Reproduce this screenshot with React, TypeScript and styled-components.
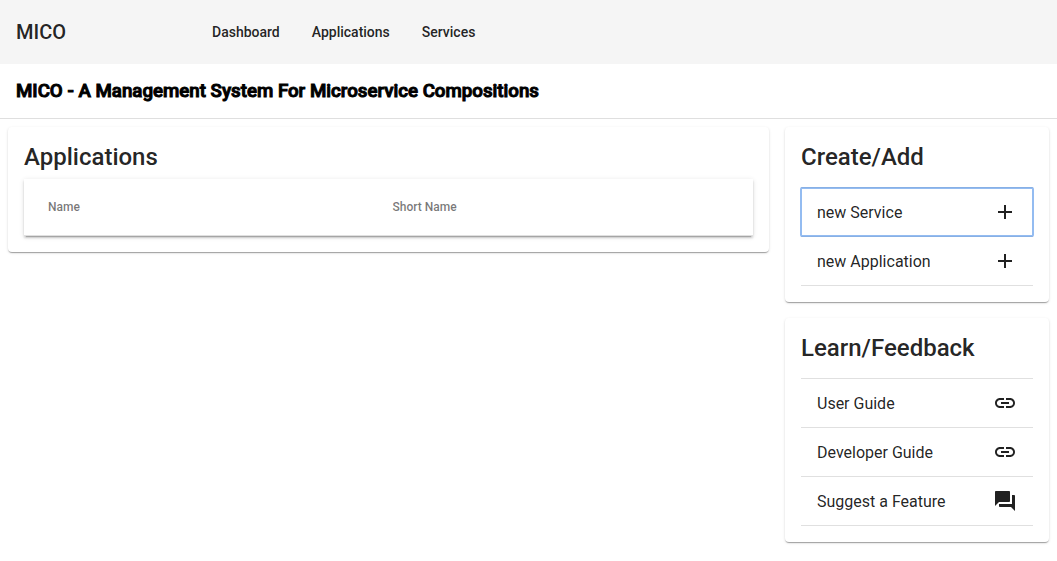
import React from "react";
import styled, { createGlobalStyle } from "styled-components";

const GlobalStyle = createGlobalStyle`
  *, *::before, *::after { box-sizing: border-box; }
  body {
    margin: 0;
    background: #fff;
    color: rgba(0, 0, 0, 0.87);
    font-family: Roboto, "Liberation Sans", sans-serif;
  }
`;

const Toolbar = styled.header`
  display: flex;
  align-items: center;
  height: 64px;
  padding: 0 16px;
  background: #f5f5f5;
`;

const Brand = styled.span`
  width: 180px;
  font-size: 20px;
  font-weight: 500;
  line-height: 32px;
`;

const Nav = styled.nav`
  display: flex;
`;

const NavLink = styled.a`
  padding: 0 16px;
  color: inherit;
  font-size: 14px;
  font-weight: 500;
  line-height: 36px;
  text-decoration: none;
`;

const PageTitle = styled.h3`
  margin: 0;
  padding: 11px 16px;
  border-bottom: 1px solid #dfdfdf;
  color: #000;
  font-weight: 500;
  line-height: 32px;
  -webkit-text-stroke: 1px #000;
`;

const Content = styled.main`
  display: grid;
  grid-template-columns: minmax(0, 1fr) 264px;
  align-items: start;
  gap: 16px;
  padding: 8px;
`;

const Sidebar = styled.aside`
  display: grid;
  gap: 16px;
`;

const Card = styled.section`
  padding: 16px;
  border-radius: 4px;
  background: #fff;
  box-shadow: 0 2px 1px -1px rgba(0, 0, 0, 0.2), 0 1px 1px 0 rgba(0, 0, 0, 0.14),
    0 1px 3px 0 rgba(0, 0, 0, 0.12);
`;

const CardTitle = styled.h2`
  margin: 0 0 8px;
  font-size: 24px;
  font-weight: 500;
  line-height: 28px;
`;

const Table = styled.table`
  width: 100%;
  table-layout: fixed;
  border-spacing: 0;
  background: #fff;
  box-shadow: 0 3px 1px -2px rgba(0, 0, 0, 0.2), 0 2px 2px 0 rgba(0, 0, 0, 0.14),
    0 1px 5px 0 rgba(0, 0, 0, 0.12);
`;

const HeaderCell = styled.th`
  height: 57px;
  padding: 0 0 0 4px;
  border-bottom: 1px solid #e0e0e0;
  color: rgba(0, 0, 0, 0.54);
  font-size: 12px;
  font-weight: 500;
  text-align: left;

  &:first-child { padding-left: 24px; }
`;

const List = styled.ul`
  margin: 16px 0 0;
  padding: 0;
  border-top: 1px solid #e0e0e0;
  list-style: none;
`;

const ListItem = styled.li`
  border-bottom: 1px solid #e0e0e0;
`;

const Action = styled.button<{ $active?: boolean }>`
  display: flex;
  align-items: center;
  justify-content: space-between;
  width: 100%;
  height: 48px;
  padding: 0 16px;
  border: 0;
  border-radius: 1px;
  background: none;
  color: inherit;
  font: inherit;
  font-size: 16px;
  text-align: left;
  text-decoration: none;
  cursor: pointer;
  outline: ${(p) => (p.$active ? "2px solid rgba(77, 144, 232, 0.6)" : "none")};
  outline-offset: -1px;
`;

const Icon = styled.svg`
  width: 24px;
  height: 24px;
  fill: currentColor;
`;

const PATHS = {
  add: "M19 13h-6v6h-2v-6H5v-2h6V5h2v6h6v2z",
  link: "M3.9 12c0-1.71 1.39-3.1 3.1-3.1h4V7H7c-2.76 0-5 2.24-5 5s2.24 5 5 5h4v-1.9H7c-1.71 0-3.1-1.39-3.1-3.1zM8 13h8v-2H8v2zm9-6h-4v1.9h4c1.71 0 3.1 1.39 3.1 3.1s-1.39 3.1-3.1 3.1h-4V17h4c2.76 0 5-2.24 5-5s-2.24-5-5-5z",
  forum: "M21 6h-2v9H6v2c0 .55.45 1 1 1h11l4 4V7c0-.55-.45-1-1-1zm-4 6V3c0-.55-.45-1-1-1H3c-.55 0-1 .45-1 1v14l4-4h10c.55 0 1-.45 1-1z",
};

const Glyph = ({ name }: { name: keyof typeof PATHS }) => (
  <Icon viewBox="0 0 24 24" aria-hidden="true">
    <path d={PATHS[name]} />
  </Icon>
);

const LINKS: { label: string; icon: keyof typeof PATHS }[] = [
  { label: "User Guide", icon: "link" },
  { label: "Developer Guide", icon: "link" },
  { label: "Suggest a Feature", icon: "forum" },
];

export default function App() {
  return (
    <>
      <GlobalStyle />
      <Toolbar>
        <Brand>MICO</Brand>
        <Nav>
          <NavLink href="#dashboard">Dashboard</NavLink>
          <NavLink href="#applications">Applications</NavLink>
          <NavLink href="#services">Services</NavLink>
        </Nav>
      </Toolbar>
      <PageTitle>MICO - A Management System For Microservice Compositions</PageTitle>
      <Content>
        <Card>
          <CardTitle>Applications</CardTitle>
          <Table>
            <thead>
              <tr>
                <HeaderCell scope="col">Name</HeaderCell>
                <HeaderCell scope="col">Short Name</HeaderCell>
              </tr>
            </thead>
          </Table>
        </Card>
        <Sidebar>
          <Card>
            <CardTitle>Create/Add</CardTitle>
            <List>
              <ListItem>
                <Action type="button" $active>
                  new Service
                  <Glyph name="add" />
                </Action>
              </ListItem>
              <ListItem>
                <Action type="button">
                  new Application
                  <Glyph name="add" />
                </Action>
              </ListItem>
            </List>
          </Card>
          <Card>
            <CardTitle>Learn/Feedback</CardTitle>
            <List>
              {LINKS.map((l) => (
                <ListItem key={l.label}>
                  <Action as="a" href="#">
                    {l.label}
                    <Glyph name={l.icon} />
                  </Action>
                </ListItem>
              ))}
            </List>
          </Card>
        </Sidebar>
      </Content>
    </>
  );
}
